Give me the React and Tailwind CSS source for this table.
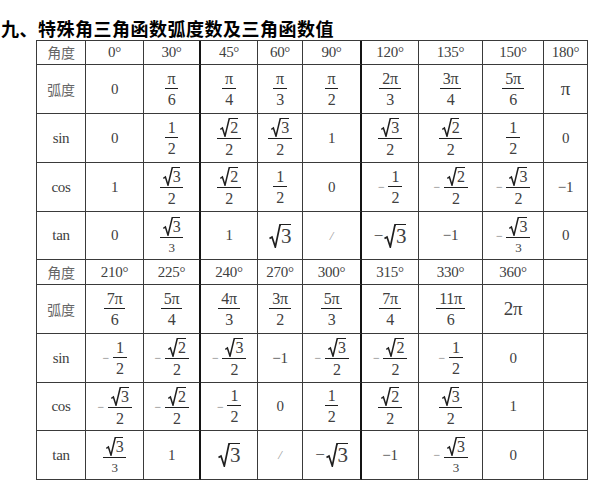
import React from 'react';

const ink = '#1f1f1f';

function Rad({ children }) {
  return (
    <span className="inline-flex items-start">
      <svg width="10" height="19" viewBox="0 0 10 19" className="block shrink-0">
        <path d="M0.3 11.5 L2.4 10 L5 18.2 L9.2 0.8 L10 0.8" fill="none" stroke={ink} strokeWidth="1.5" />
      </svg>
      <span className="border-t-[1.5px] border-[#1f1f1f] pt-px text-[16px] leading-[16px]">{children}</span>
    </span>
  );
}

function BigRad({ children }) {
  return (
    <span className="inline-flex items-start">
      <svg width="12" height="24" viewBox="0 0 12 24" className="block shrink-0">
        <path d="M0.5 14.5 L3 13 L6.3 23 L11 0.8 L12 0.8" fill="none" stroke={ink} strokeWidth="1.7" />
      </svg>
      <span className="border-t-[1.5px] border-[#1f1f1f] pt-px text-[21px] leading-[21px]">{children}</span>
    </span>
  );
}

function Frac({ n, d, small }) {
  return (
    <span className="inline-flex flex-col items-center text-[16px]">
      <span className="flex items-end justify-center border-b-[1.5px] border-[#1f1f1f] px-[3px] pb-px leading-[16px]">{n}</span>
      <span className={small ? 'pt-[3px] text-[13px] leading-[13px]' : 'pt-[3px] leading-[16px]'}>{d}</span>
    </span>
  );
}

function Neg({ children }) {
  return (
    <span className="inline-flex items-center">
      <span className="mr-[4px] text-[12px] text-[#777]">−</span>
      {children}
    </span>
  );
}

const F = (n, d, small) => <Frac n={n} d={d} small={small} />;
const r2 = <Rad>2</Rad>;
const r3 = <Rad>3</Rad>;
const bigR3 = <BigRad>3</BigRad>;
const negBigR3 = (
  <span className="inline-flex items-center">
    <span className="mr-px text-[17px]">−</span>
    {bigR3}
  </span>
);
const slash = <span className="text-[13px] italic text-[#999]">/</span>;
const big = (t) => <span className="text-[19px]">{t}</span>;
const label = (t) => <span className="font-['Noto_Sans_CJK_SC',sans-serif] text-[14px] text-[#666]">{t}</span>;

const rows = [
  [label('角度'), '0°', '30°', '45°', '60°', '90°', '120°', '135°', '150°', '180°'],
  [label('弧度'), '0', F('π', '6'), F('π', '4'), F('π', '3'), F('π', '2'), F('2π', '3'), F('3π', '4'), F('5π', '6'), big('π')],
  ['sin', '0', F('1', '2'), F(r2, '2'), F(r3, '2'), '1', F(r3, '2'), F(r2, '2'), F('1', '2'), '0'],
  ['cos', '1', F(r3, '2'), F(r2, '2'), F('1', '2'), '0', <Neg>{F('1', '2')}</Neg>, <Neg>{F(r2, '2')}</Neg>, <Neg>{F(r3, '2')}</Neg>, '−1'],
  ['tan', '0', F(r3, '3', true), '1', bigR3, slash, negBigR3, '−1', <Neg>{F(r3, '3', true)}</Neg>, '0'],
  [label('角度'), '210°', '225°', '240°', '270°', '300°', '315°', '330°', '360°', ''],
  [label('弧度'), F('7π', '6'), F('5π', '4'), F('4π', '3'), F('3π', '2'), F('5π', '3'), F('7π', '4'), F('11π', '6'), big('2π'), ''],
  ['sin', <Neg>{F('1', '2')}</Neg>, <Neg>{F(r2, '2')}</Neg>, <Neg>{F(r3, '2')}</Neg>, '−1', <Neg>{F(r3, '2')}</Neg>, <Neg>{F(r2, '2')}</Neg>, <Neg>{F('1', '2')}</Neg>, '0', ''],
  ['cos', <Neg>{F(r3, '2')}</Neg>, <Neg>{F(r2, '2')}</Neg>, <Neg>{F('1', '2')}</Neg>, '0', F('1', '2'), F(r2, '2'), F(r3, '2'), '1', ''],
  ['tan', F(r3, '3', true), '1', bigR3, slash, negBigR3, '−1', <Neg>{F(r3, '3', true)}</Neg>, '0', ''],
];

export default function App() {
  return (
    <div className="h-[490px] w-[602px] overflow-hidden bg-white">
      <div className="pl-[1px] pt-[17px] font-['Noto_Sans_CJK_SC',sans-serif] text-[18px] font-bold leading-[22px] tracking-[0.5px] text-black">
        九、特殊角三角函数弧度数及三角函数值
      </div>
      <div className="ml-[36px] mt-px grid w-max grid-cols-[49px_58px_57px_57px_45px_59px_57px_64px_61px_44px] grid-rows-[24px_49px_49px_49px_48px_25px_49px_49px_48px_49px] border-l border-t border-[#3a3a3a] font-['Liberation_Serif',serif] text-[15px] tracking-[-0.3px] text-[#404040]">
        {rows.map((row, ri) =>
          row.map((cell, ci) => (
            <div
              key={`${ri}-${ci}`}
              className={
                ci === 2 || ci === 5
                  ? 'flex items-center justify-center border-b border-r-2 border-b-[#3a3a3a] border-r-[#141414]'
                  : 'flex items-center justify-center border-b border-r border-[#3a3a3a]'
              }
            >
              {cell}
            </div>
          ))
        )}
      </div>
    </div>
  );
}
